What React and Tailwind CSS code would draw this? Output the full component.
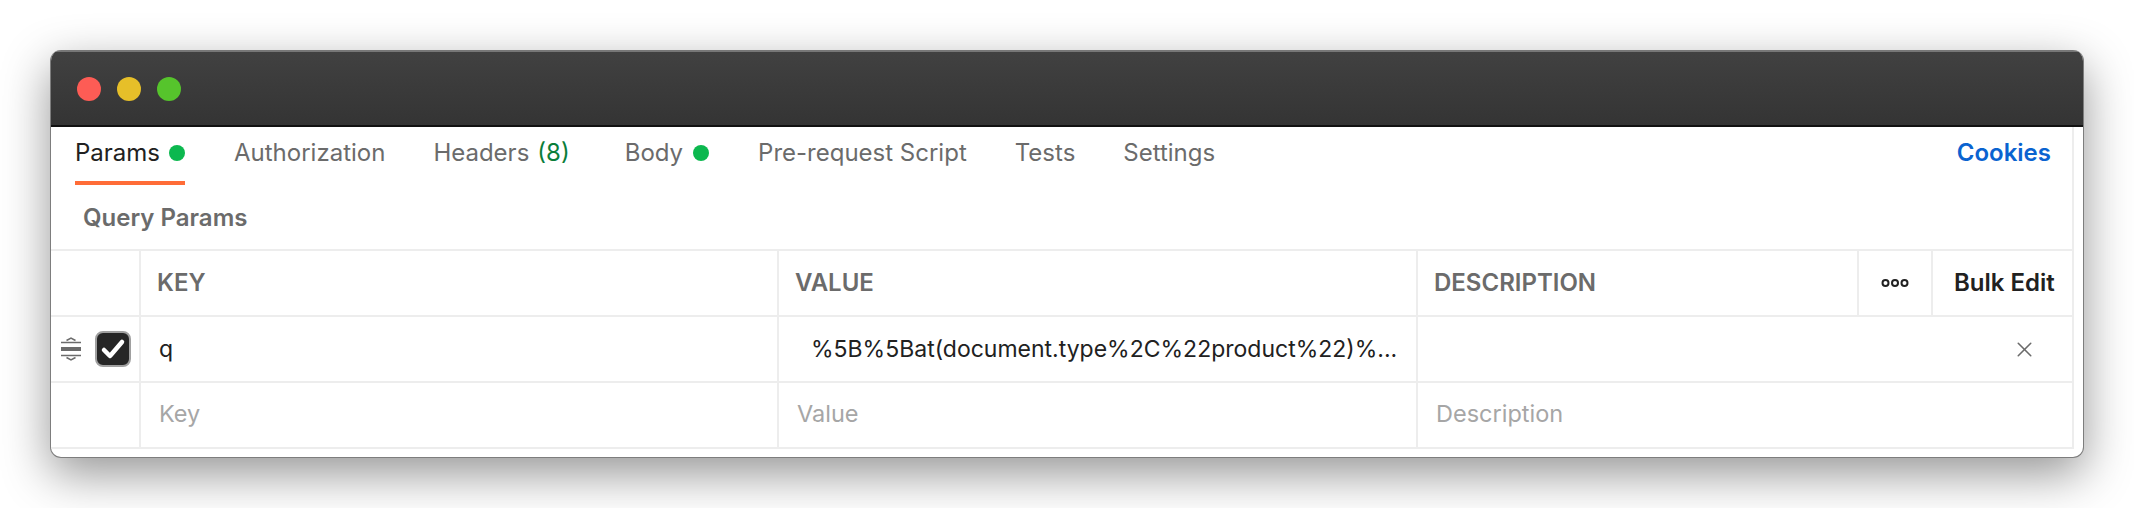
import React from "react";
import { X } from "lucide-react";

function DragIcon() {
  return (
    <svg width="22" height="24" viewBox="0 0 22 24" className="text-[#6b6b6b]" fill="none" stroke="currentColor">
      <path d="M1 5.5h20M1 18.5h20" strokeWidth="1.5" />
      <path d="M1 10h20v4H1z" stroke="none" fill="currentColor" />
      <path d="M6.5 3.5L11 1l4.5 2.5M6.5 20.5L11 23l4.5-2.5" strokeWidth="1.5" />
    </svg>
  );
}

function Check() {
  return (
    <div className="w-9 h-9 rounded-lg bg-[#262626] border-2 border-[#a0a0a0] flex items-center justify-center">
      <svg width="26" height="22" viewBox="0 0 26 22" fill="none" stroke="white" strokeWidth="4.5" strokeLinecap="round" strokeLinejoin="round">
        <path d="M4 12l6 6L22 4" />
      </svg>
    </div>
  );
}

function Tab({ label, left, children }) {
  return (
    <div className={`flex items-center h-[55px] pb-[3px] ${left}`}>
      <span>{label}</span>
      {children}
    </div>
  );
}

const cell = "h-[66px] flex items-center border-r-2 border-[#ededed] shrink-0";

function Row({ first, k, v, d, keyClass, valClass, descClass }) {
  return (
    <div className="flex border-b-2 border-[#ededed] h-[66px] box-border">
      <div className={`${cell} w-[90px] h-full`}>{first}</div>
      <div className={`${cell} w-[638px] h-full pl-[18px] ${keyClass}`}>{k}</div>
      <div className={`${cell} w-[639px] h-full pl-[18px] ${valClass}`}>{v}</div>
      <div className={`flex-1 h-full flex items-center pl-[18px] ${descClass}`}>{d}</div>
    </div>
  );
}

export default function App() {
  return (
    <div className="h-[508px] w-full bg-white overflow-hidden pt-[50px] pl-[50px] pr-[50px] font-['Inter',sans-serif]">
      <div className="w-[2034px] h-[408px] rounded-[11px] overflow-hidden bg-white border border-[#7d7d7d] border-t-0 shadow-[0_16px_48px_rgba(0,0,0,0.42)]">
        {/* title bar */}
        <div className="h-[77px] bg-linear-to-b from-[#414141] to-[#343434] border-t-2 border-t-[#777] border-b-2 border-b-[#111] flex items-center pl-[26px] gap-4">
          <div className="w-6 h-6 rounded-full bg-[#fd5c55]" />
          <div className="w-6 h-6 rounded-full bg-[#e6bf29]" />
          <div className="w-6 h-6 rounded-full bg-[#56c42c]" />
        </div>

        <div className="border-r-2 border-[#ededed] w-[2023px]">
          {/* tabs */}
          <div className="flex items-start pl-6 pr-[21px] text-[24px] text-[#6b6b6b]">
            <div className="border-b-4 border-[#ff6c37] h-[58px] pb-[2px] flex items-center w-[110px] text-[#212121]">
              <span>Params</span>
              <span className="ml-[9px] w-4 h-4 rounded-full bg-[#0cb84f]" />
            </div>
            <Tab label="Authorization" left="ml-[49px]" />
            <Tab label="Headers" left="ml-[48px]">
              <span className="ml-[8px] text-[#0a7d3a]">(8)</span>
            </Tab>
            <Tab label="Body" left="ml-[55px]">
              <span className="ml-[10px] w-4 h-4 rounded-full bg-[#0cb84f]" />
            </Tab>
            <Tab label="Pre-request Script" left="ml-[49px]" />
            <Tab label="Tests" left="ml-[48px]" />
            <Tab label="Settings" left="ml-[48px]" />
            <div className="ml-auto h-[55px] pb-[3px] flex items-center font-semibold text-[#0a63d0]">Cookies</div>
          </div>

          <div className="h-[66px] pt-[2px] flex items-center pl-8 text-[24px] font-semibold text-[#6b6b6b] border-b-2 border-[#ededed]">
            Query Params
          </div>

          {/* table header */}
          <div className="flex border-b-2 border-[#ededed] h-[66px] text-[24px] font-semibold text-[#6b6b6b]">
            <div className={`${cell} w-[90px] h-full`} />
            <div className={`${cell} w-[638px] h-full pl-4`}>KEY</div>
            <div className={`${cell} w-[639px] h-full pl-4`}>VALUE</div>
            <div className={`${cell} w-[441px] h-full pl-4`}>DESCRIPTION</div>
            <div className={`${cell} w-[74px] h-full justify-center`}>
              <svg width="28" height="10" viewBox="0 0 28 10" fill="none" stroke="#212121" strokeWidth="2">
                <circle cx="4.5" cy="5" r="3" />
                <circle cx="14" cy="5" r="3" />
                <circle cx="23.5" cy="5" r="3" />
              </svg>
            </div>
            <div className="flex-1 h-full flex items-center pl-[21px] text-[#212121]">Bulk Edit</div>
          </div>

          <Row
            first={
              <div className="flex items-center pl-[9px] gap-[13px]">
                <DragIcon />
                <Check />
              </div>
            }
            k="q"
            v={<span className="pl-[14px] whitespace-nowrap">%5B%5Bat(document.type%2C%22product%22)%...</span>}
            d={
              <div className="ml-auto mr-[35px]">
                <X size={25} strokeWidth={1.5} className="text-[#6b6b6b]" />
              </div>
            }
            keyClass="text-[23px] text-[#212121]"
            valClass="text-[23px] text-[#212121]"
          />
          <Row
            k="Key"
            v="Value"
            d="Description"
            keyClass="text-[23.5px] pb-[2px] text-[#a6a6a6]"
            valClass="text-[23.5px] pb-[2px] text-[#a6a6a6]"
            descClass="text-[23.5px] pb-[2px] text-[#a6a6a6]"
          />
        </div>
      </div>
    </div>
  );
}
